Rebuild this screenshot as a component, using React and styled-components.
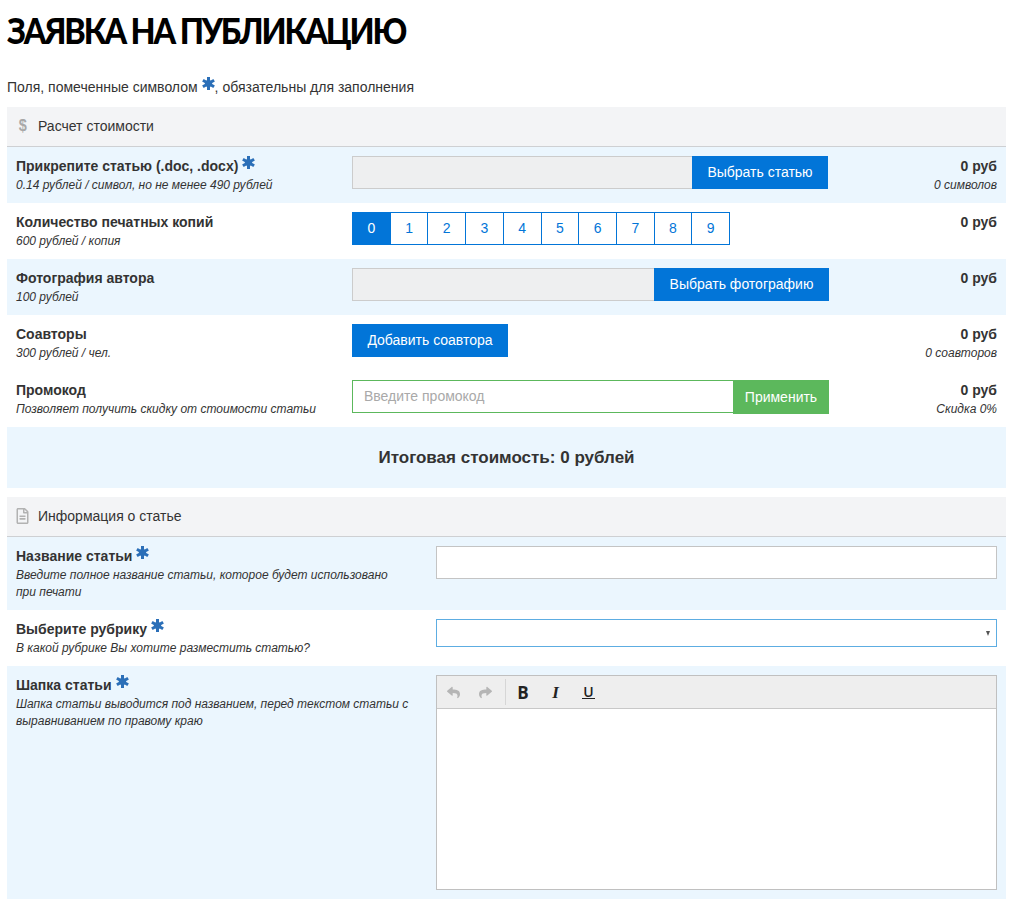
import React from "react";
import styled, { createGlobalStyle } from "styled-components";
import { FaRegFileAlt, FaReply, FaShare } from "react-icons/fa";

const Global = createGlobalStyle`
  html, body { margin: 0; padding: 0; background: #fff; }
  body { font-family: "Liberation Sans", Arial, sans-serif; font-size: 14px; color: #333; }
  * { box-sizing: border-box; }
`;
const Page = styled.div`
  width: 1011px;
  padding: 0 5px 0 7px;
`;
const Title = styled.h1`
  margin: 0;
  padding-top: 8px;
  height: 75px;
  font-family: Lato, sans-serif;
  font-weight: 900;
  font-size: 36px;
  line-height: 45px;
  letter-spacing: -2.35px;
  color: #000;
  text-transform: uppercase;
  white-space: nowrap;
  transform: scaleX(0.9);
  transform-origin: left center;
`;
const Note = styled.p`
  margin: 0;
  height: 32px;
  line-height: 24px;
  font-size: 14px;
`;
const StarSvg = styled.svg`
  display: inline-block;
  width: 13px;
  height: 13px;
  color: #2b6fb8;
  vertical-align: 2px;
  margin: 0 0 0 4px;
`;
const Star = () => (
  <StarSvg viewBox="0 0 13 13" aria-hidden="true">
    <g stroke="currentColor" strokeWidth="3" strokeLinecap="butt">
      <line x1="6.5" y1="0" x2="6.5" y2="13" />
      <line x1="0.9" y1="3.25" x2="12.1" y2="9.75" />
      <line x1="0.9" y1="9.75" x2="12.1" y2="3.25" />
    </g>
    <circle cx="6.5" cy="6.5" r="3.6" fill="currentColor" />
  </StarSvg>
);
const SectionHead = styled.div`
  display: flex;
  align-items: center;
  height: 40px;
  background: #f3f4f6;
  border-bottom: 1px solid #ced0d3;
  padding: 0 0 2px 9px;
  font-size: 14px;
  color: #333;
`;
const HeadIcon = styled.span`
  display: flex;
  justify-content: center;
  width: 13px;
  margin-right: 9px;
  color: #b2b2b2;
  font-size: 16px;
`;
const DollarGlyph = styled.span`
  display: inline-block;
  font: 700 17px/1 "Liberation Sans", sans-serif;
  color: #a8a8a8;
  transform: scaleX(0.85);
`;
const Row = styled.div`
  display: grid;
  grid-template-columns: ${p => p.$cols};
  min-height: ${p => p.$h}px;
  padding: 9px 9px 0;
  background: ${p => (p.$tint ? "#ebf6fe" : "#fff")};
`;
const Label = styled.div`
  font-weight: 700;
  font-size: 14px;
  line-height: 20px;
  color: #333;
`;
const Hint = styled.div`
  font-weight: 400;
  font-style: italic;
  font-size: 12px;
  line-height: 17px;
  color: #333;
  margin-top: 1px;
`;
const Controls = styled.div`
  display: flex;
  align-items: flex-start;
`;
const FileField = styled.div`
  width: ${p => p.$w}px;
  height: 33px;
  background: #eeeff0;
  border: 1px solid #ccc;
  border-right: 0;
`;
const Button = styled.button`
  flex: none;
  height: ${p => p.$h || 33}px;
  width: ${p => p.$w}px;
  padding: 0;
  border: 0;
  background: ${p => p.$bg || "#0275d8"};
  color: #fff;
  font: 14px/33px "Liberation Sans", Arial, sans-serif;
`;
const NumberGroup = styled.div`
  display: flex;
  width: 378px;
  height: 33px;
  border: 1px solid #0275d8;
`;
const NumberCell = styled.div`
  flex: 1;
  text-align: center;
  line-height: 31px;
  font-size: 14px;
  background: ${p => (p.$active ? "#0275d8" : "#fff")};
  color: ${p => (p.$active ? "#fff" : "#0275d8")};
  & + & { border-left: 1px solid #0275d8; }
`;
const PromoInput = styled.div`
  flex: none;
  width: 381px;
  height: 33px;
  border: 1px solid #5cb85c;
  border-right: 0;
  padding-left: 11px;
  line-height: 30px;
  font-size: 14px;
  color: #a9a9a9;
  background: #fff;
`;
const Price = styled.div`
  text-align: right;
  font-weight: 700;
  font-size: 14px;
  line-height: 20px;
`;
const Total = styled.div`
  height: 61px;
  background: #ebf6fe;
  text-align: center;
  font-weight: 700;
  font-size: 17px;
  line-height: 61px;
  color: #333;
  margin-bottom: 9px;
`;
const TextInput = styled.div`
  height: 33px;
  background: #fff;
  border: 1px solid #c4c4c4;
`;
const SelectBox = styled.div`
  position: relative;
  height: 28px;
  background: #fff;
  border: 1px solid #5dade2;
  &::after {
    content: "";
    position: absolute;
    right: 6px;
    top: 11px;
    border-left: 2.5px solid transparent;
    border-right: 2.5px solid transparent;
    border-top: 5px solid #555;
  }
`;
const Editor = styled.div`
  height: 215px;
  background: #fff;
  border: 1px solid #c0c0c0;
`;
const Toolbar = styled.div`
  display: flex;
  align-items: center;
  height: 33px;
  background: #eee;
  border-bottom: 1px solid #c8c8c8;
`;
const ToolButton = styled.span`
  display: flex;
  align-items: center;
  justify-content: center;
  flex: none;
  width: 32px;
  height: 32px;
  font-size: 13px;
  color: ${p => (p.$muted ? "#b5b5b5" : "#222")};
`;
const ToolSep = styled.span`
  width: 1px;
  height: 26px;
  background: #d6d6d6;
  margin: 0 1px 0 4px;
`;
const BoldGlyph = styled.span`
  font: 700 17px/1 "Open Sans", sans-serif;
`;
const ItalicGlyph = styled.span`
  font: italic 700 17px/1 "Liberation Serif", serif;
  margin-left: 1px;
`;
const UnderGlyph = styled.span`
  font: 600 14px/13px "Open Sans", sans-serif;
  border-bottom: 1.5px solid #222;
  padding: 0 1px;
  margin-left: 3px;
`;

const PRICE_COLS = "336px 1fr 130px";
const INFO_COLS = "420px 1fr";

function PriceRow({ tint, label, star, hint, note, children }) {
  return (
    <Row $cols={PRICE_COLS} $h={56} $tint={tint}>
      <Label>
        {label}
        {star && <Star />}
        <Hint>{hint}</Hint>
      </Label>
      <Controls>{children}</Controls>
      <Price>
        0 руб
        {note && <Hint>{note}</Hint>}
      </Price>
    </Row>
  );
}

function InfoRow({ tint, h, label, hint, children }) {
  return (
    <Row $cols={INFO_COLS} $h={h} $tint={tint}>
      <Label>
        {label}
        <Star />
        <Hint>{hint}</Hint>
      </Label>
      <div>{children}</div>
    </Row>
  );
}

export default function App() {
  return (
    <Page>
      <Global />
      <Title>Заявка на публикацию</Title>
      <Note>
        Поля, помеченные символом
        <Star />, обязательны для заполнения
      </Note>
      <SectionHead>
        <HeadIcon><DollarGlyph>$</DollarGlyph></HeadIcon>
        Расчет стоимости
      </SectionHead>
      <PriceRow tint label="Прикрепите статью (.doc, .docx)" star hint="0.14 рублей / символ, но не менее 490 рублей" note="0 символов">
        <FileField $w={340} />
        <Button $w={136}>Выбрать статью</Button>
      </PriceRow>
      <PriceRow label="Количество печатных копий" hint="600 рублей / копия">
        <NumberGroup>
          {[0, 1, 2, 3, 4, 5, 6, 7, 8, 9].map(n => (
            <NumberCell key={n} $active={n === 0}>{n}</NumberCell>
          ))}
        </NumberGroup>
      </PriceRow>
      <PriceRow tint label="Фотография автора" hint="100 рублей">
        <FileField $w={302} />
        <Button $w={175}>Выбрать фотографию</Button>
      </PriceRow>
      <PriceRow label="Соавторы" hint="300 рублей / чел." note="0 соавторов">
        <Button $w={156}>Добавить соавтора</Button>
      </PriceRow>
      <PriceRow label="Промокод" hint="Позволяет получить скидку от стоимости статьи" note="Скидка 0%">
        <PromoInput>Введите промокод</PromoInput>
        <Button $w={96} $h={34} $bg="#5cb85c">Применить</Button>
      </PriceRow>
      <Total>Итоговая стоимость: 0 рублей</Total>
      <SectionHead>
        <HeadIcon><FaRegFileAlt /></HeadIcon>
        Информация о статье
      </SectionHead>
      <InfoRow tint h={73} label="Название статьи" hint={<>Введите полное название статьи, которое будет использовано<br />при печати</>}>
        <TextInput />
      </InfoRow>
      <InfoRow h={56} label="Выберите рубрику" hint="В какой рубрике Вы хотите разместить статью?">
        <SelectBox />
      </InfoRow>
      <InfoRow tint h={233} label="Шапка статьи" hint={<>Шапка статьи выводится под названием, перед текстом статьи с<br />выравниванием по правому краю</>}>
        <Editor>
          <Toolbar>
            <ToolButton $muted><FaReply /></ToolButton>
            <ToolButton $muted><FaShare /></ToolButton>
            <ToolSep />
            <ToolButton><BoldGlyph>B</BoldGlyph></ToolButton>
            <ToolButton><ItalicGlyph>I</ItalicGlyph></ToolButton>
            <ToolButton><UnderGlyph>U</UnderGlyph></ToolButton>
          </Toolbar>
        </Editor>
      </InfoRow>
    </Page>
  );
}
